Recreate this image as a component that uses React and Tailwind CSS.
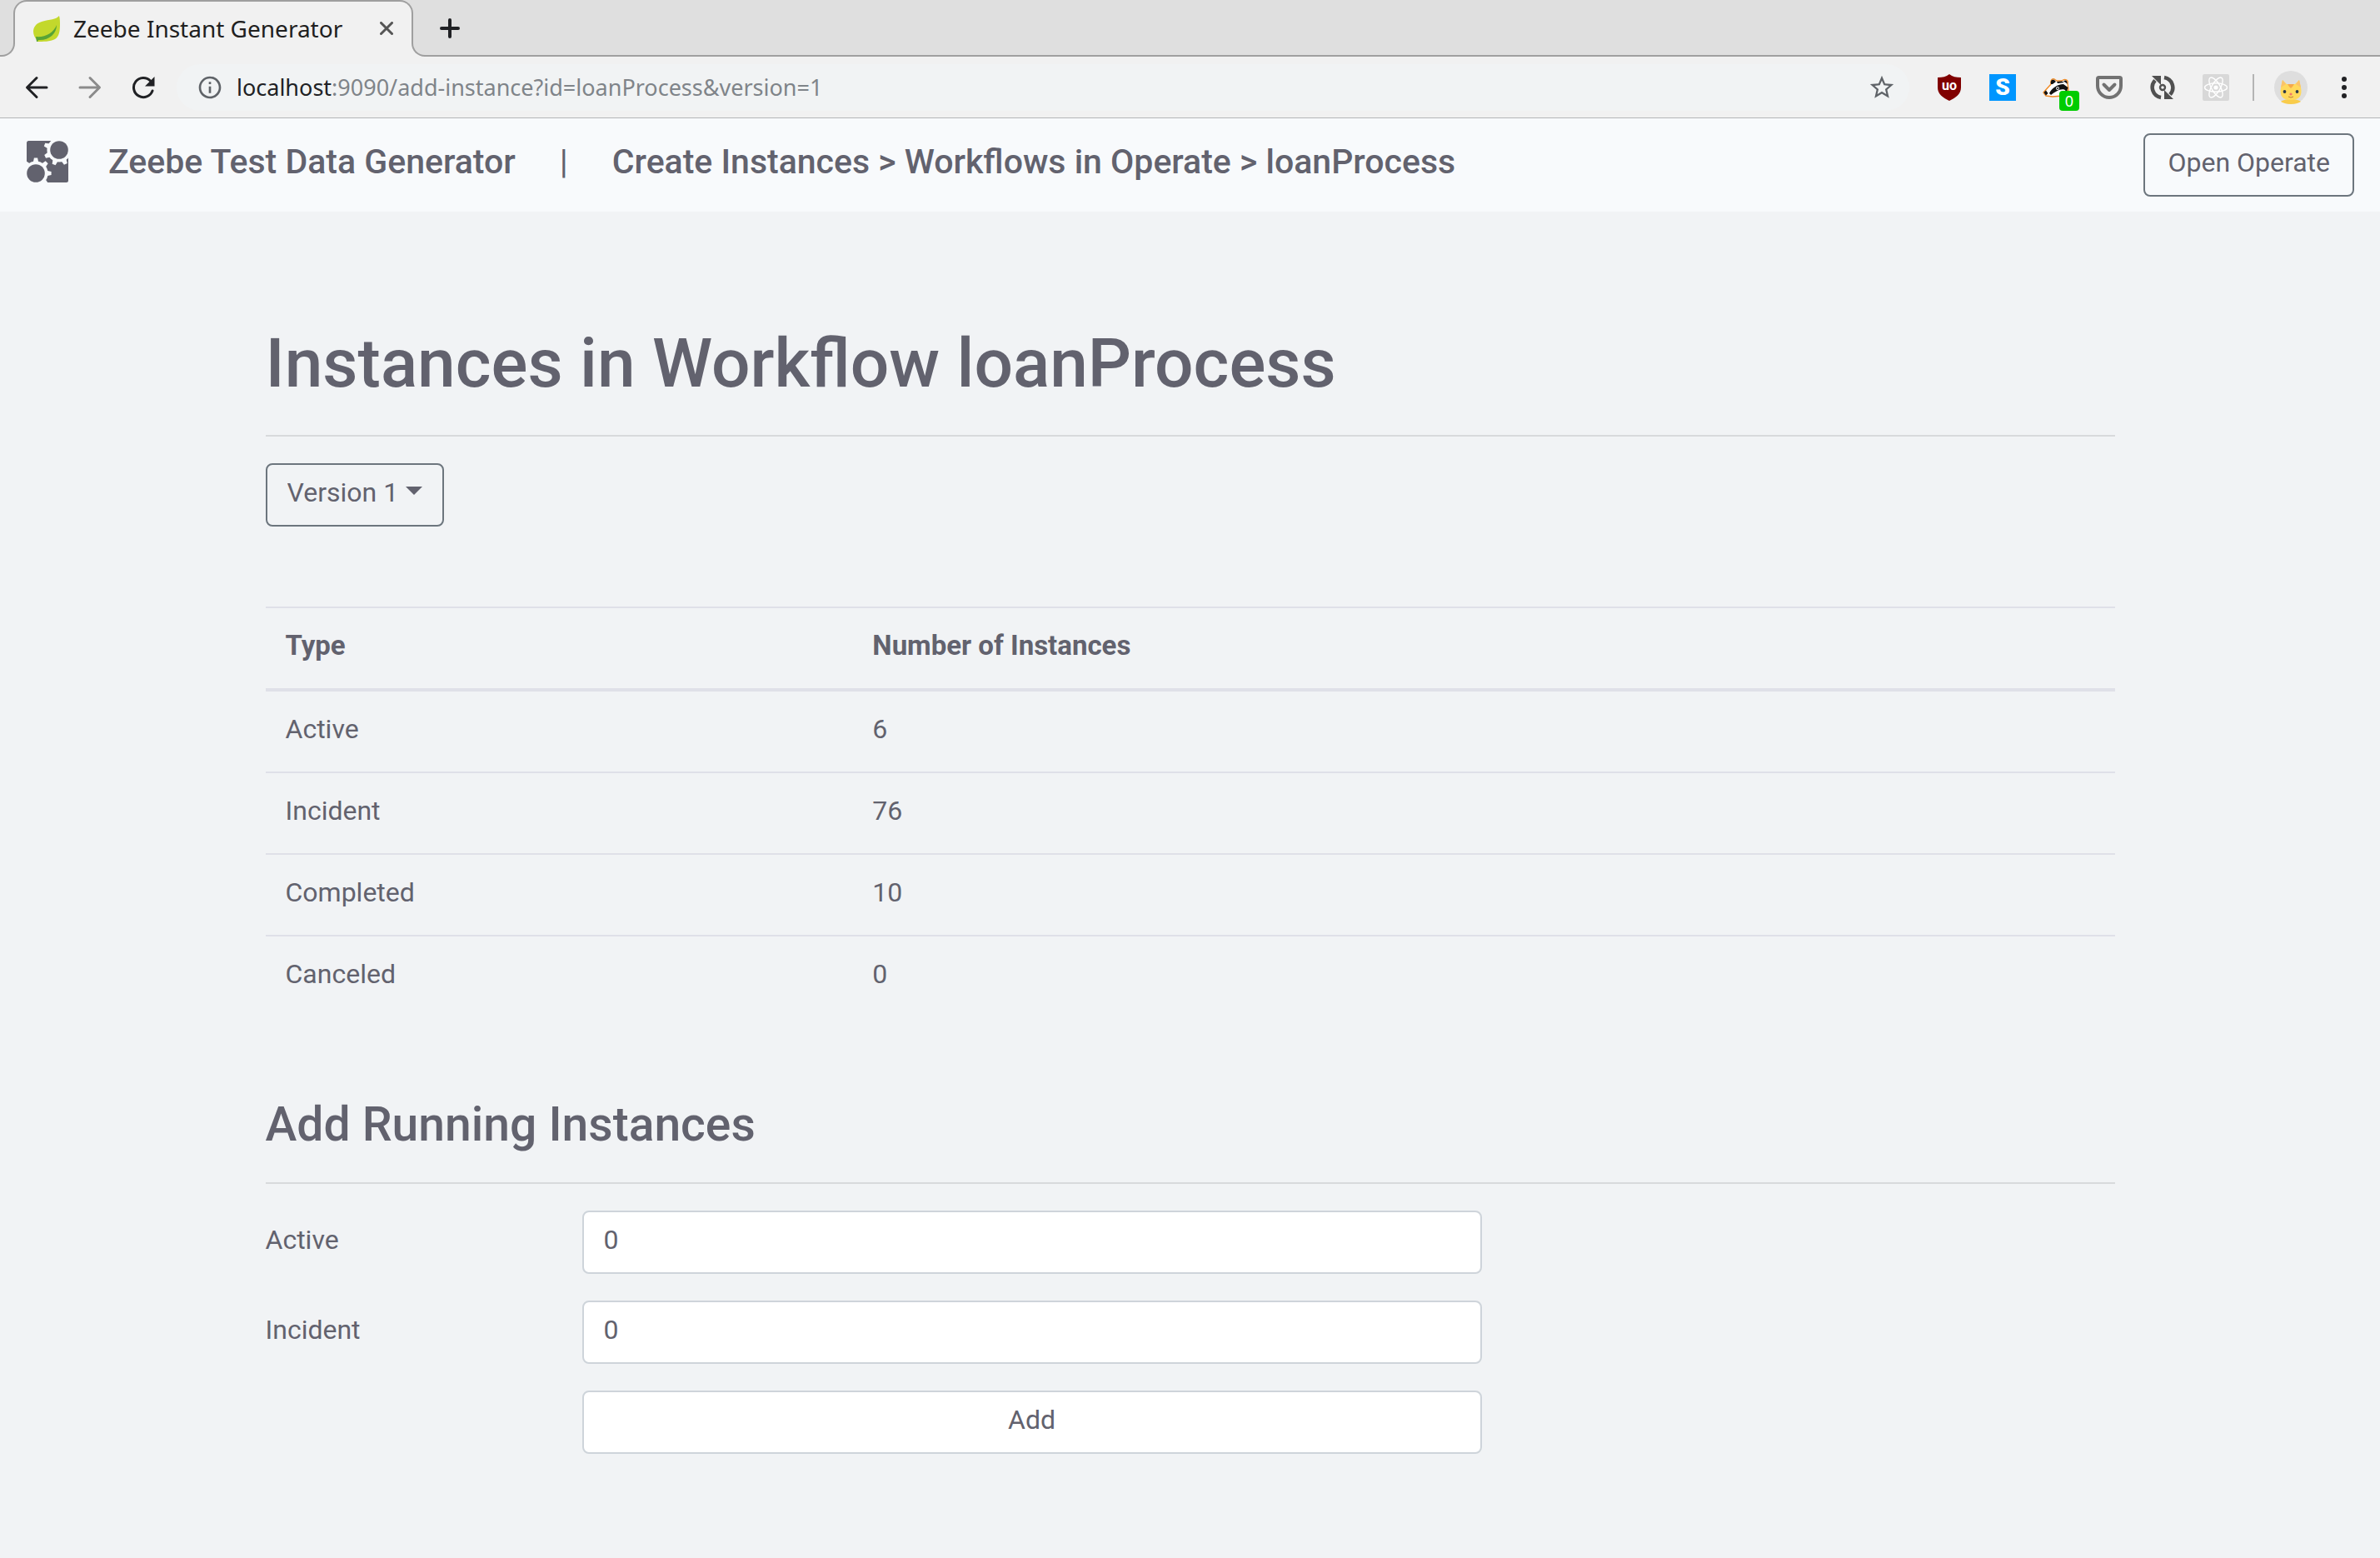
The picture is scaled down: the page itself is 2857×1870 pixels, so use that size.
import React from "react";
import { MdInfoOutline, MdStarBorder } from "react-icons/md";

const counts = [
  ["Active", "6"],
  ["Incident", "76"],
  ["Completed", "10"],
  ["Canceled", "0"],
];

function LeafIcon() {
  return (
    <svg viewBox="0 0 32 32" className="size-8 shrink-0" aria-hidden="true">
      <path d="M31 1C27 6 20 5 10 8C3 10 0 15 0 20C0 24 2 27 4 30L4 32C12 32 20 32 26 29C31 26 32 19 32 12C32 8 32 4 31 1Z" fill="#c3d82c" />
      <path d="M3 26C14 27 24 22 28 12C28 23 18 31 6 30L5 32L4 32Z" fill="#57a336" />
    </svg>
  );
}

function Teeth({ cx, cy, start }) {
  return [0, 45, 90, 135, 180, 225, 270, 315].map((step) => (
    <path
      key={step}
      d={`M${cx + 13} ${cy - 3.2}L${cx + 18.6} ${cy - 2.1}L${cx + 18.6} ${cy + 2.1}L${cx + 13} ${cy + 3.2}Z`}
      transform={`rotate(${start + step} ${cx} ${cy})`}
    />
  ));
}

function GearLogo() {
  return (
    <svg viewBox="0 0 50 50" className="size-[50px] shrink-0" aria-hidden="true">
      <rect width="50" height="50" rx="2.5" fill="#62626e" />
      <g fill="#f8fafc">
        <circle cx="39" cy="11" r="14.6" />
        <circle cx="11" cy="39" r="14.6" />
        <path d="M36 0H50V4H36Z M0 46H4V50H0Z" />
        <Teeth cx={39} cy={11} start={20} />
        <Teeth cx={11} cy={39} start={0} />
      </g>
      <circle cx="39" cy="11" r="10.8" fill="#62626e" />
      <circle cx="11" cy="39" r="10.8" fill="#62626e" />
    </svg>
  );
}

function BadgerIcon() {
  return (
    <svg viewBox="0 0 32 24" className="h-6 w-8" aria-hidden="true">
      <path d="M1 18L10 8C9 4 11 1 14 2L17 4L23 4C27 1 31 3 30 7L31 15L24 22L12 23L4 22Z" fill="#fff" stroke="#f08a24" strokeWidth="1.4" strokeLinejoin="round" />
      <path d="M1.500 18L4 15.500L6.500 19L4 21.500Z" fill="#111" />
      <path d="M10 8C9 4 11 2 14 3L16 5L12 8Z" fill="#111" />
      <path d="M8 19C11 13 17 8.500 25 8L30.500 12L29 17L26 14.500C21 13 15 17 10 21Z" fill="#111" />
      <path d="M17 5L23 4.500L26 6L18 7Z" fill="#111" />
      <path d="M25 4.500C28 2 30 4 29.500 8C28 6 27 5.500 25 4.500Z" fill="#111" />
      <circle cx="18" cy="13" r="1.900" fill="#fff" />
      <circle cx="18" cy="13" r="1" fill="#111" />
    </svg>
  );
}

function CatAvatar() {
  return (
    <svg viewBox="0 0 40 40" className="size-10" aria-hidden="true">
      <circle cx="20" cy="20" r="20" fill="#dedede" />
      <path d="M8 37C12 33 28 33 32 37C26 41 14 41 8 37Z" fill="#f9cc4a" />
      <path d="M8 20L10 11L15 16H25L30 11L32 20C34 30 30 35 20 35C10 35 6 30 8 20Z" fill="#ffd95c" />
      <path d="M8 20L10 11L14 16Z M32 20L30 11L26 16Z" fill="#fbc26a" />
      <path d="M16 16H24L22 19L20 21L18 19Z" fill="#f5a84a" />
      <circle cx="12.5" cy="25" r="1.9" fill="#2b3a4a" />
      <circle cx="27.5" cy="25" r="1.9" fill="#2b3a4a" />
      <circle cx="20" cy="28" r="1.6" fill="#f2766b" />
      <path d="M17 31Q20 33 23 31" fill="none" stroke="#b8803a" />
    </svg>
  );
}

function TabStrip() {
  return (
    <div className="flex h-[68px] bg-[#dfdfdf]">
      <div className="z-10 flex w-[18px] flex-col justify-end">
        <div className="h-[34px] bg-[#f1f1f1]">
          <div className="h-full rounded-br-2xl border-r-2 border-b-2 border-[#9f9f9f] bg-[#dfdfdf]" />
        </div>
      </div>
      <div className="-mx-[2px] flex w-[480px] items-center rounded-t-2xl border-x-2 border-t-2 border-[#9f9f9f] bg-[#f1f1f1] pr-[14px] pb-[2px] pl-[22px]">
        <LeafIcon />
        <span className="ml-4 flex-1 text-[28px] leading-[40px] whitespace-nowrap text-[#202020]">Zeebe Instant Generator</span>
        <button type="button" aria-label="Close tab" className="flex size-8 items-center justify-center">
          <svg viewBox="0 0 16 16" className="size-4" fill="none" stroke="#555" strokeWidth="3" strokeLinecap="round" aria-hidden="true">
            <path d="M1.5 1.5L14.5 14.5M14.5 1.5L1.5 14.5" />
          </svg>
        </button>
      </div>
      <div className="z-10 flex w-[18px] flex-col justify-end">
        <div className="h-[34px] bg-[#f1f1f1]">
          <div className="h-full rounded-bl-2xl border-b-2 border-l-2 border-[#9f9f9f] bg-[#dfdfdf]" />
        </div>
      </div>
      <div className="flex flex-1 items-center border-b-2 border-[#9f9f9f] pt-[2px] pl-[12px]">
        <button type="button" aria-label="New tab" className="flex size-8 items-center justify-center">
          <svg viewBox="0 0 24 24" className="size-6" fill="none" stroke="#202124" strokeWidth="4" strokeLinecap="round" aria-hidden="true">
            <path d="M12 2V22M2 12H22" />
          </svg>
        </button>
      </div>
    </div>
  );
}

function NavButton({ label, children }) {
  return (
    <button type="button" aria-label={label} className="flex h-14 w-16 shrink-0 items-center justify-center">
      {children}
    </button>
  );
}

function Toolbar() {
  return (
    <div className="flex h-[74px] items-center border-b border-[#b4b6b8] bg-[#f1f1f1] pl-3">
      <NavButton label="Back">
        <svg viewBox="0 0 28 28" className="size-7" fill="none" stroke="#202124" strokeWidth="3" strokeLinecap="round" strokeLinejoin="round" aria-hidden="true">
          <path d="M26 14H3M14 2.5L2.5 14L14 25.5" />
        </svg>
      </NavButton>
      <NavButton label="Forward">
        <svg viewBox="0 0 28 28" className="size-7" fill="none" stroke="#8b8b8b" strokeWidth="3" strokeLinecap="round" strokeLinejoin="round" aria-hidden="true">
          <path d="M2 14H25M14 2.5L25.5 14L14 25.5" />
        </svg>
      </NavButton>
      <NavButton label="Reload">
        <svg viewBox="0 0 28 28" className="size-7" aria-hidden="true">
          <path d="M25 18A11.6 11.6 0 1 1 22.5 6" fill="none" stroke="#202124" strokeWidth="3" strokeLinecap="round" />
          <path d="M27.5 1V12.5H16Z" fill="#202124" />
        </svg>
      </NavButton>
      <div className="ml-2 flex h-14 flex-1 items-center rounded-full bg-[#f1f3f4] pr-4 pl-6">
        <MdInfoOutline className="size-8 shrink-0 text-[#5f6368]" aria-hidden="true" />
        <span className="ml-4 flex-1 text-[27px] leading-[40px] whitespace-nowrap text-[#7f8489]">
          <span className="text-[#202124]">localhost</span>:9090/add-instance?id=loanProcess&amp;version=1
        </span>
        <button type="button" aria-label="Bookmark this page">
          <MdStarBorder className="size-[34px] text-[#5f6368]" aria-hidden="true" />
        </button>
      </div>
      <div className="ml-4 flex items-center">
        <NavButton label="uBlock Origin">
          <svg viewBox="0 0 28 32" className="h-8 w-7" aria-hidden="true">
            <path d="M14 0C18 3 22 4 28 4V16C28 24 22 28 14 32C6 28 0 24 0 16V4C6 4 10 3 14 0Z" fill="#800000" />
            <text x="14" y="19" textAnchor="middle" fill="#fff" fontFamily="Roboto, sans-serif" fontWeight="700" fontSize="16">uo</text>
          </svg>
        </NavButton>
        <NavButton label="Stylus">
          <span className="flex size-8 items-center justify-center bg-[#0096ff] font-[Roboto,sans-serif] text-[28px] leading-8 font-black text-white">S</span>
        </NavButton>
        <NavButton label="Privacy Badger">
          <span className="relative flex size-8 items-center">
            <BadgerIcon />
            <span className="absolute top-5 left-5 flex size-6 items-center justify-center rounded-sm bg-[#00cc00] text-[18px] leading-6 text-white">0</span>
          </span>
        </NavButton>
        <NavButton label="Pocket">
          <svg viewBox="0 0 32 28" className="h-7 w-8" fill="none" stroke="#727272" strokeLinejoin="round" strokeLinecap="round" aria-hidden="true">
            <path d="M3.5 2H28.5Q30 2 30 3.500V12A14 14 0 0 1 2 12V3.500Q2 2 3.500 2Z" strokeWidth="4" />
            <path d="M9.500 10.500L16 17L22.500 10.500" strokeWidth="4" />
          </svg>
        </NavButton>
        <NavButton label="Reload extension">
          <svg viewBox="0 0 30 30" className="size-[30px]" aria-hidden="true">
            <path d="M13 27A12.300 12.300 0 0 1 6 6.500M17 3A12.300 12.300 0 0 1 24 23.500" fill="none" stroke="#505050" strokeWidth="4.500" />
            <path d="M2 1H13V12Z M28 29H17V18Z" fill="#505050" />
            <circle cx="15" cy="15" r="3" fill="none" stroke="#505050" strokeWidth="2.400" />
          </svg>
        </NavButton>
        <NavButton label="React Developer Tools">
          <svg viewBox="0 0 32 32" className="size-8" aria-hidden="true">
            <rect width="32" height="32" rx="2" fill="#d8d8d8" />
            <g fill="none" stroke="#fff" strokeWidth="1.400">
              <ellipse cx="16" cy="16" rx="13.500" ry="5.200" />
              <ellipse cx="16" cy="16" rx="13.500" ry="5.200" transform="rotate(60 16 16)" />
              <ellipse cx="16" cy="16" rx="13.500" ry="5.200" transform="rotate(120 16 16)" />
            </g>
            <circle cx="16" cy="16" r="2.600" fill="#fff" />
          </svg>
        </NavButton>
      </div>
      <div className="mr-6 ml-3 h-8 w-[2px] bg-[#b4b4b4]" />
      <button type="button" aria-label="Profile">
        <CatAvatar />
      </button>
      <button type="button" aria-label="Browser menu" className="mr-[27px] ml-7 flex h-10 w-8 flex-col items-center justify-center gap-1">
        <span className="size-[6px] rounded-full bg-[#202124]" />
        <span className="size-[6px] rounded-full bg-[#202124]" />
        <span className="size-[6px] rounded-full bg-[#202124]" />
      </button>
    </div>
  );
}

function AppHeader() {
  return (
    <header className="flex h-28 items-start justify-between bg-[#f8fafc] px-8 pt-[18px] pr-[31px]">
      <div className="flex h-[68px] items-center text-[41px] leading-[60px] font-medium whitespace-nowrap">
        <GearLogo />
        <a href="#home" className="pl-12">Zeebe Test Data Generator</a>
        <span className="w-[116px] text-center font-normal">|</span>
        <a href="#instances">Create Instances &gt; Workflows in Operate &gt; loanProcess</a>
      </div>
      <a href="#operate" className="rounded-lg border-2 border-[#6c757d] px-[27px] pt-[9px] pb-[15px] text-[32px] leading-[48px] whitespace-nowrap">
        Open Operate
      </a>
    </header>
  );
}

function VersionSelect() {
  return (
    <div className="relative inline-flex">
      <select aria-label="Version" className="h-[76px] w-[214px] appearance-none rounded-lg border-2 border-[#6c757d] bg-transparent pt-[9px] pr-[44px] pb-[15px] pl-6 text-[32px] leading-[48px]">
        <option>Version 1</option>
      </select>
      <svg viewBox="0 0 20 10" className="pointer-events-none absolute top-7 right-[26px] h-[10px] w-5" aria-hidden="true">
        <path d="M0 0H20L10 10Z" fill="#62626e" />
      </svg>
    </div>
  );
}

function CountTable() {
  return (
    <table className="mt-24 w-full border-collapse text-left text-[32px] leading-[48px]">
      <colgroup>
        <col className="w-[31.75%]" />
        <col />
      </colgroup>
      <thead>
        <tr className="border-t-2 border-b-4 border-[#dfe0e8] text-[33px]">
          <th scope="col" className="px-6 pt-[21px] pb-[27px] font-bold">Type</th>
          <th scope="col" className="px-6 pt-[21px] pb-[27px] font-bold">Number of Instances</th>
        </tr>
      </thead>
      <tbody>
        {counts.map(([type, count]) => (
          <tr key={type} className="border-b-2 border-[#dfe0e8] last:border-b-0">
            <td className="px-6 pt-[21px] pb-[27px]">{type}</td>
            <td className="px-6 pt-[21px] pb-[27px]">{count}</td>
          </tr>
        ))}
      </tbody>
    </table>
  );
}

function NumberField({ id, label }) {
  return (
    <div className="grid grid-cols-12 gap-x-[60px]">
      <label htmlFor={id} className="col-span-2 pt-[11px] leading-[48px]">{label}</label>
      <input
        id={id}
        type="text"
        inputMode="numeric"
        defaultValue="0"
        className="col-span-6 h-[76px] rounded-lg border-2 border-[#ced4da] bg-white px-6 pt-[9px] pb-[15px] leading-[48px]"
      />
    </div>
  );
}

export default function App() {
  return (
    <div className="min-h-screen bg-[#f1f3f5] font-[Roboto,sans-serif] text-[#62626e]">
      <div className="font-['Noto_Sans',sans-serif]">
        <TabStrip />
        <Toolbar />
      </div>
      <AppHeader />
      <main className="mx-auto max-w-[2220px] pt-[134px] pb-20">
        <h1 className="text-[82px] leading-[96px] font-medium">Instances in Workflow loanProcess</h1>
        <hr className="mt-[38px] mb-8 border-t-2 border-black/10" />
        <VersionSelect />
        <CountTable />
        <h2 className="mt-24 text-[57px] leading-[68px] font-medium">Add Running Instances</h2>
        <hr className="mt-[35px] mb-8 border-t-2 border-black/10" />
        <form className="flex flex-col gap-8 text-[32px]" onSubmit={(e) => e.preventDefault()}>
          <NumberField id="active" label="Active" />
          <NumberField id="incident" label="Incident" />
          <div className="grid grid-cols-12 gap-x-[60px]">
            <button type="submit" className="col-span-6 col-start-3 h-[76px] rounded-lg border-2 border-[#ced4da] bg-white pt-[9px] pb-[15px] leading-[48px]">
              Add
            </button>
          </div>
        </form>
      </main>
    </div>
  );
}
